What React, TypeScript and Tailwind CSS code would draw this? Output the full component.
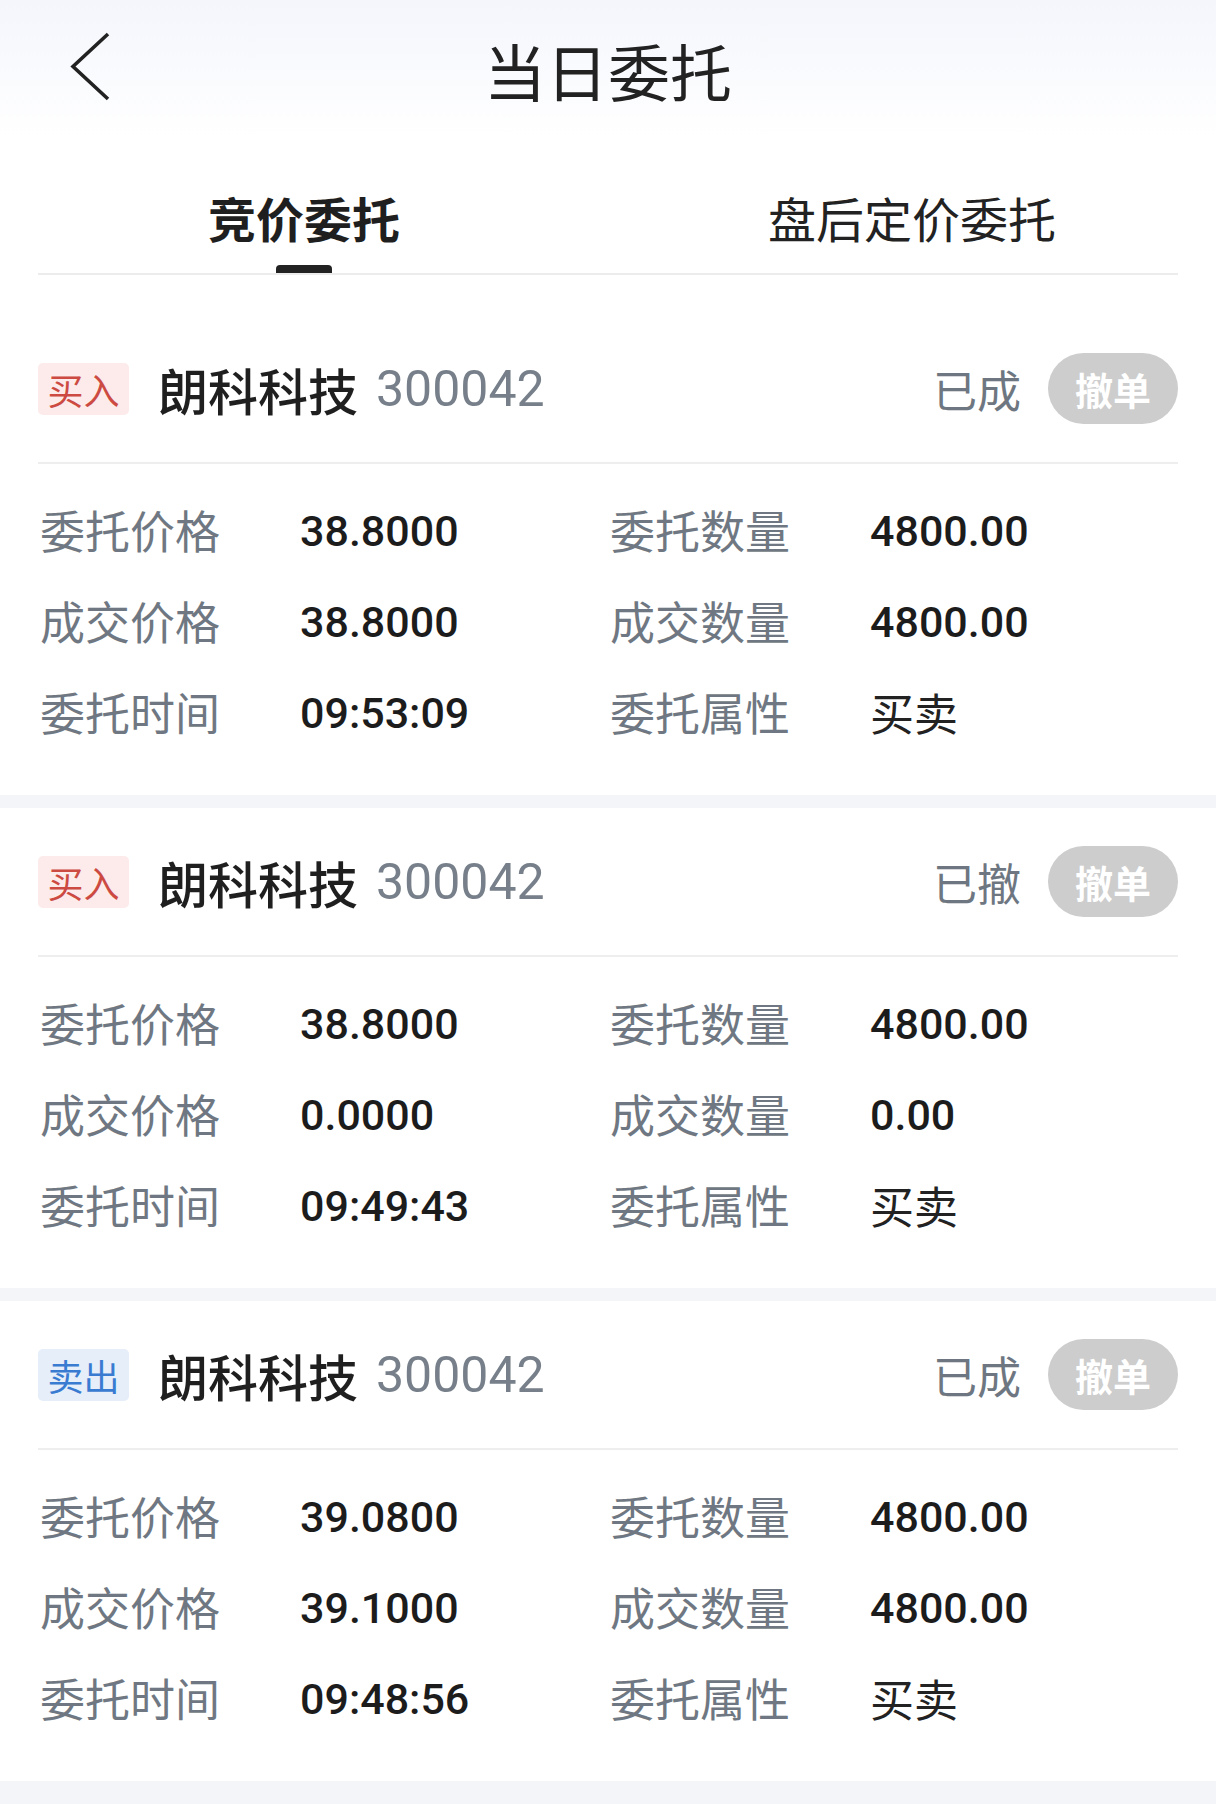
import React from "react";

type Order = {
  side: "buy" | "sell";
  status: string;
  price: string;
  qty: string;
  dealPrice: string;
  dealQty: string;
  time: string;
};

const orders: Order[] = [
  { side: "buy", status: "已成", price: "38.8000", qty: "4800.00", dealPrice: "38.8000", dealQty: "4800.00", time: "09:53:09" },
  { side: "buy", status: "已撤", price: "38.8000", qty: "4800.00", dealPrice: "0.0000", dealQty: "0.00", time: "09:49:43" },
  { side: "sell", status: "已成", price: "39.0800", qty: "4800.00", dealPrice: "39.1000", dealQty: "4800.00", time: "09:48:56" },
];

const cjk = "font-['Noto_Sans_CJK_SC',sans-serif]";
const num = "font-['Roboto','Noto_Sans_CJK_SC',sans-serif]";

function Field({ label, value, isNum = true }: { label: string; value: string; isNum?: boolean }) {
  return (
    <div className="flex items-center h-[91px]">
      <span className={`w-[262px] pl-[2px] pb-[4px] text-[45px] leading-none text-[#6f7882] ${cjk}`}>{label}</span>
      <span
        className={
          isNum
            ? `text-[43px] leading-none font-medium text-[#1c1c1c] ${num}`
            : `pb-[4px] text-[44px] leading-none text-[#222222] ${cjk}`
        }
      >
        {value}
      </span>
    </div>
  );
}

function OrderCard({ order }: { order: Order }) {
  const buy = order.side === "buy";
  return (
    <div className="bg-white px-[38px]">
      <div className="h-[149px] flex items-center border-b-2 border-[#eeeeee]">
        <div
          className={`w-[91px] h-[52px] rounded-[5px] flex items-center justify-center text-[36px] leading-none ${cjk} ${
            buy ? "bg-[#fcebea] text-[#cc4a42]" : "bg-[#e5eef9] text-[#3a7bd2]"
          }`}
        >
          {buy ? "买入" : "卖出"}
        </div>
        <span className={`ml-[29px] text-[50px] leading-none font-medium text-[#1f1f1f] ${cjk}`}>朗科科技</span>
        <span className={`ml-[18px] text-[50px] leading-none text-[#77808a] ${num}`}>300042</span>
        <span className={`ml-auto text-[44px] leading-none text-[#6e7781] ${cjk}`}>{order.status}</span>
        <button className={`ml-[27px] w-[130px] h-[71px] rounded-full bg-[#cdcdcd] text-white text-[38px] leading-none font-bold ${cjk}`}>
          撤单
        </button>
      </div>
      <div className="pt-[22px] pb-[36px] grid grid-cols-2">
        <Field label="委托价格" value={order.price} />
        <Field label="委托数量" value={order.qty} />
        <Field label="成交价格" value={order.dealPrice} />
        <Field label="成交数量" value={order.dealQty} />
        <Field label="委托时间" value={order.time} />
        <Field label="委托属性" value="买卖" isNum={false} />
      </div>
    </div>
  );
}

export default function App() {
  return (
    <div className={`w-[1216px] min-h-[1804px] bg-[#f4f5f9] ${cjk}`}>
      <div className="h-[140px] grid grid-cols-[1fr_auto_1fr] items-center bg-linear-to-b from-[#f4f6fc] to-white">
        <button className="justify-self-start ml-[70px] mt-[-6px]">
          <svg width="40" height="70" viewBox="0 0 40 70" fill="none">
            <polyline points="38,2 3,34.5 38,67" stroke="#222222" strokeWidth="3.6" strokeLinejoin="miter" />
          </svg>
        </button>
        <h1 className="text-[62px] leading-none text-[#222222] font-normal">当日委托</h1>
        <div />
      </div>

      <div className="bg-white pb-[40px]">
        <div className="flex h-[133px]">
          <div className="flex-1 flex flex-col items-center pt-[53px]">
            <span className="text-[48px] leading-[48px] font-bold text-[#1f1f1f]">竞价委托</span>
            <span className="mt-auto w-[56px] h-[8px] rounded-t-[4px] bg-[#222222]" />
          </div>
          <div className="flex-1 flex flex-col items-center pt-[53px]">
            <span className="text-[48px] leading-[48px] text-[#222222]">盘后定价委托</span>
          </div>
        </div>
        <div className="mx-[38px] h-[2px] bg-[#ececec]" />
      </div>

      <div className="flex flex-col gap-[13px]">
        {orders.map((o, i) => (
          <OrderCard key={i} order={o} />
        ))}
      </div>
    </div>
  );
}
